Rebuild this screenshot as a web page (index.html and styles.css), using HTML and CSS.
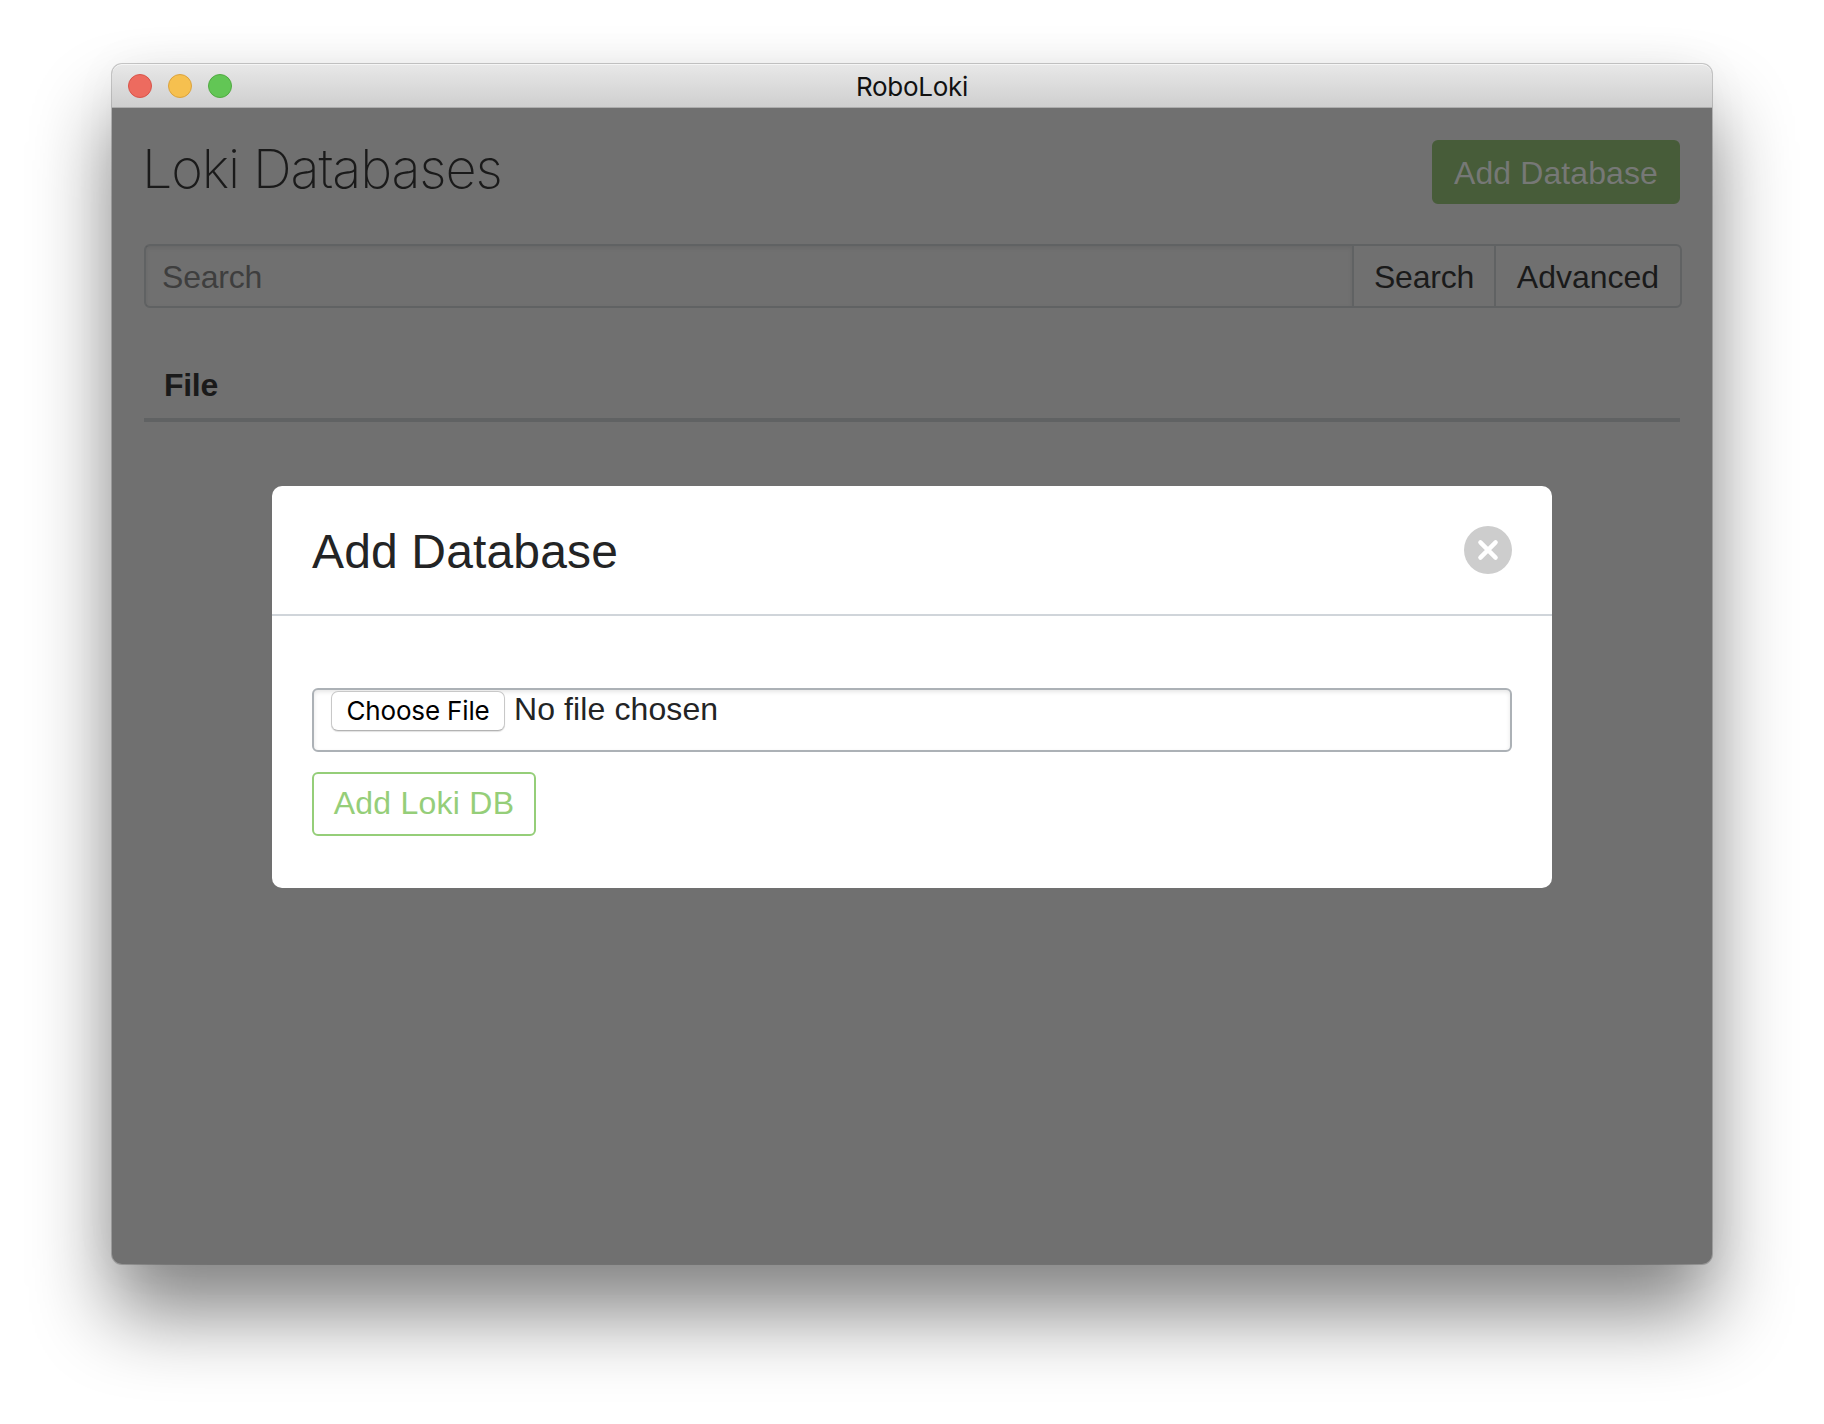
FILE: index.html
```html
<!DOCTYPE html>
<html lang="en">
<head>
<meta charset="utf-8">
<title>RoboLoki</title>
<link rel="stylesheet" href="styles.css">
</head>
<body>
<div class="window">
  <header class="titlebar">
    <div class="lights"><span class="light close"></span><span class="light minimize"></span><span class="light zoom"></span></div>
    <span class="app-title">RoboLoki</span>
  </header>
  <main class="content">
    <div class="page-head">
      <h1 class="page-title">Loki Databases</h1>
      <button class="btn btn-primary">Add Database</button>
    </div>
    <form class="search">
      <input class="search-input" type="text" placeholder="Search">
      <button class="search-btn search-go" type="button">Search</button>
      <button class="search-btn search-advanced" type="button">Advanced</button>
    </form>
    <div class="table-head">File</div>
    <section class="modal">
      <div class="modal-head">
        <h2 class="modal-title">Add Database</h2>
        <svg class="modal-close" viewBox="0 0 48 48"><circle cx="24" cy="24" r="24" fill="#cdcdcd"/><path d="M16.4 16.4L31.6 31.6M31.6 16.4L16.4 31.6" stroke="#fff" stroke-width="4.4" stroke-linecap="round"/></svg>
      </div>
      <div class="modal-body">
        <div class="file-field"><button class="choose" type="button">Choose File</button><span class="file-name">No file chosen</span></div>
        <button class="btn btn-outline" type="button">Add Loki DB</button>
      </div>
    </section>
  </main>
</div>
</body>
</html>
```
FILE: styles.css
```css
* { box-sizing: border-box; }
body {
  margin: 0;
  height: 1424px;
  padding: 64px 112px 0;
  overflow: hidden;
  background: #fff;
  color: #1a1a1a;
  font: 32px/36px "Liberation Sans", Arial, sans-serif;
}
button, input { font: inherit; margin: 0; }
h1, h2 { margin: 0; font-weight: 400; }

.window {
  width: 1600px;
  height: 1200px;
  border-radius: 10px;
  background: #707070;
  box-shadow: 0 0 0 1px rgba(0, 0, 0, .2), 0 50px 80px rgba(0, 0, 0, .48), 0 0 50px rgba(0, 0, 0, .04);
}
.titlebar {
  display: grid;
  grid-template-columns: 1fr auto 1fr;
  align-items: center;
  height: 44px;
  padding: 0 16px;
  border-radius: 10px 10px 0 0;
  border-bottom: 1px solid #adadad;
  background: linear-gradient(#e8e8e8, #cfcfcf);
  box-shadow: inset 0 1px #f5f5f5;
}
.lights { display: flex; gap: 16px; }
.light { width: 24px; height: 24px; border-radius: 50%; border: 1px solid; }
.close { background: #ed6b5f; border-color: #d8544a; }
.minimize { background: #f6c04f; border-color: #dba33e; }
.zoom { background: #62c655; border-color: #51aa42; }
.app-title { padding-top: 2px; color: #111; font: 26px/32px Inter, sans-serif; letter-spacing: -.3px; }

.content { padding: 32px; }
.page-head { display: flex; justify-content: space-between; align-items: flex-start; height: 104px; }
.page-title { margin-left: -2px; padding-top: 1px; font: 200 54px/56px Inter, sans-serif; letter-spacing: -1.15px; }
.btn { height: 64px; border: 2px solid; border-radius: 6px; }
.btn-primary { width: 248px; padding: 2px 0 0; background: #475c39; border-color: #475c39; color: #767876; letter-spacing: .1px; }

.search { display: flex; width: 1538px; height: 64px; border: 2px solid #606263; border-radius: 6px; }
.search-input {
  flex: 1;
  min-width: 0;
  border: 0;
  padding: 2px 16px 0;
  background: none;
  box-shadow: inset 0 2px 4px rgba(0, 0, 0, .08);
  letter-spacing: -.2px;
}
.search-input::placeholder { color: #3e3e3e; opacity: 1; }
.search-btn { padding: 2px 0 0; border: 0; border-left: 2px solid #606263; background: none; color: #1a1a1a; }
.search-go { width: 142px; letter-spacing: -.2px; }
.search-advanced { width: 186px; }

.table-head { height: 62px; margin-top: 52px; padding: 7px 20px 0; border-bottom: 4px solid #606263; font-weight: 700; letter-spacing: -.3px; }

.modal { width: 1280px; height: 402px; margin: 64px auto 0; border-radius: 10px; background: #fff; color: #232425; }
.modal-head { display: flex; justify-content: space-between; align-items: center; height: 130px; padding: 0 40px; border-bottom: 2px solid #d0d5da; }
.modal-title { padding-top: 4px; font-size: 48px; line-height: 56px; letter-spacing: .15px; }
.modal-close { width: 48px; height: 48px; }
.modal-body { padding: 72px 40px 0; }
.file-field {
  display: flex;
  gap: 9px;
  height: 64px;
  margin-bottom: 20px;
  padding: 1px 17px;
  border: 2px solid #acb1b6;
  border-radius: 6px;
  box-shadow: inset 0 2px 4px rgba(0, 0, 0, .1);
}
.file-name { letter-spacing: .1px; }
.choose {
  width: 174px;
  height: 40px;
  padding: 0;
  border: 1px solid #c8c8c8;
  border-bottom-color: #b3b3b3;
  border-radius: 7px;
  background: #fff;
  box-shadow: 0 1px 1px rgba(0, 0, 0, .12);
  color: #000;
  font: 26px/36px Inter, sans-serif;
  letter-spacing: -.15px;
}
.btn-outline { width: 224px; padding: 0 0 2px; background: #fff; border-color: #95ce79; color: #95ce79; letter-spacing: .25px; }
```
